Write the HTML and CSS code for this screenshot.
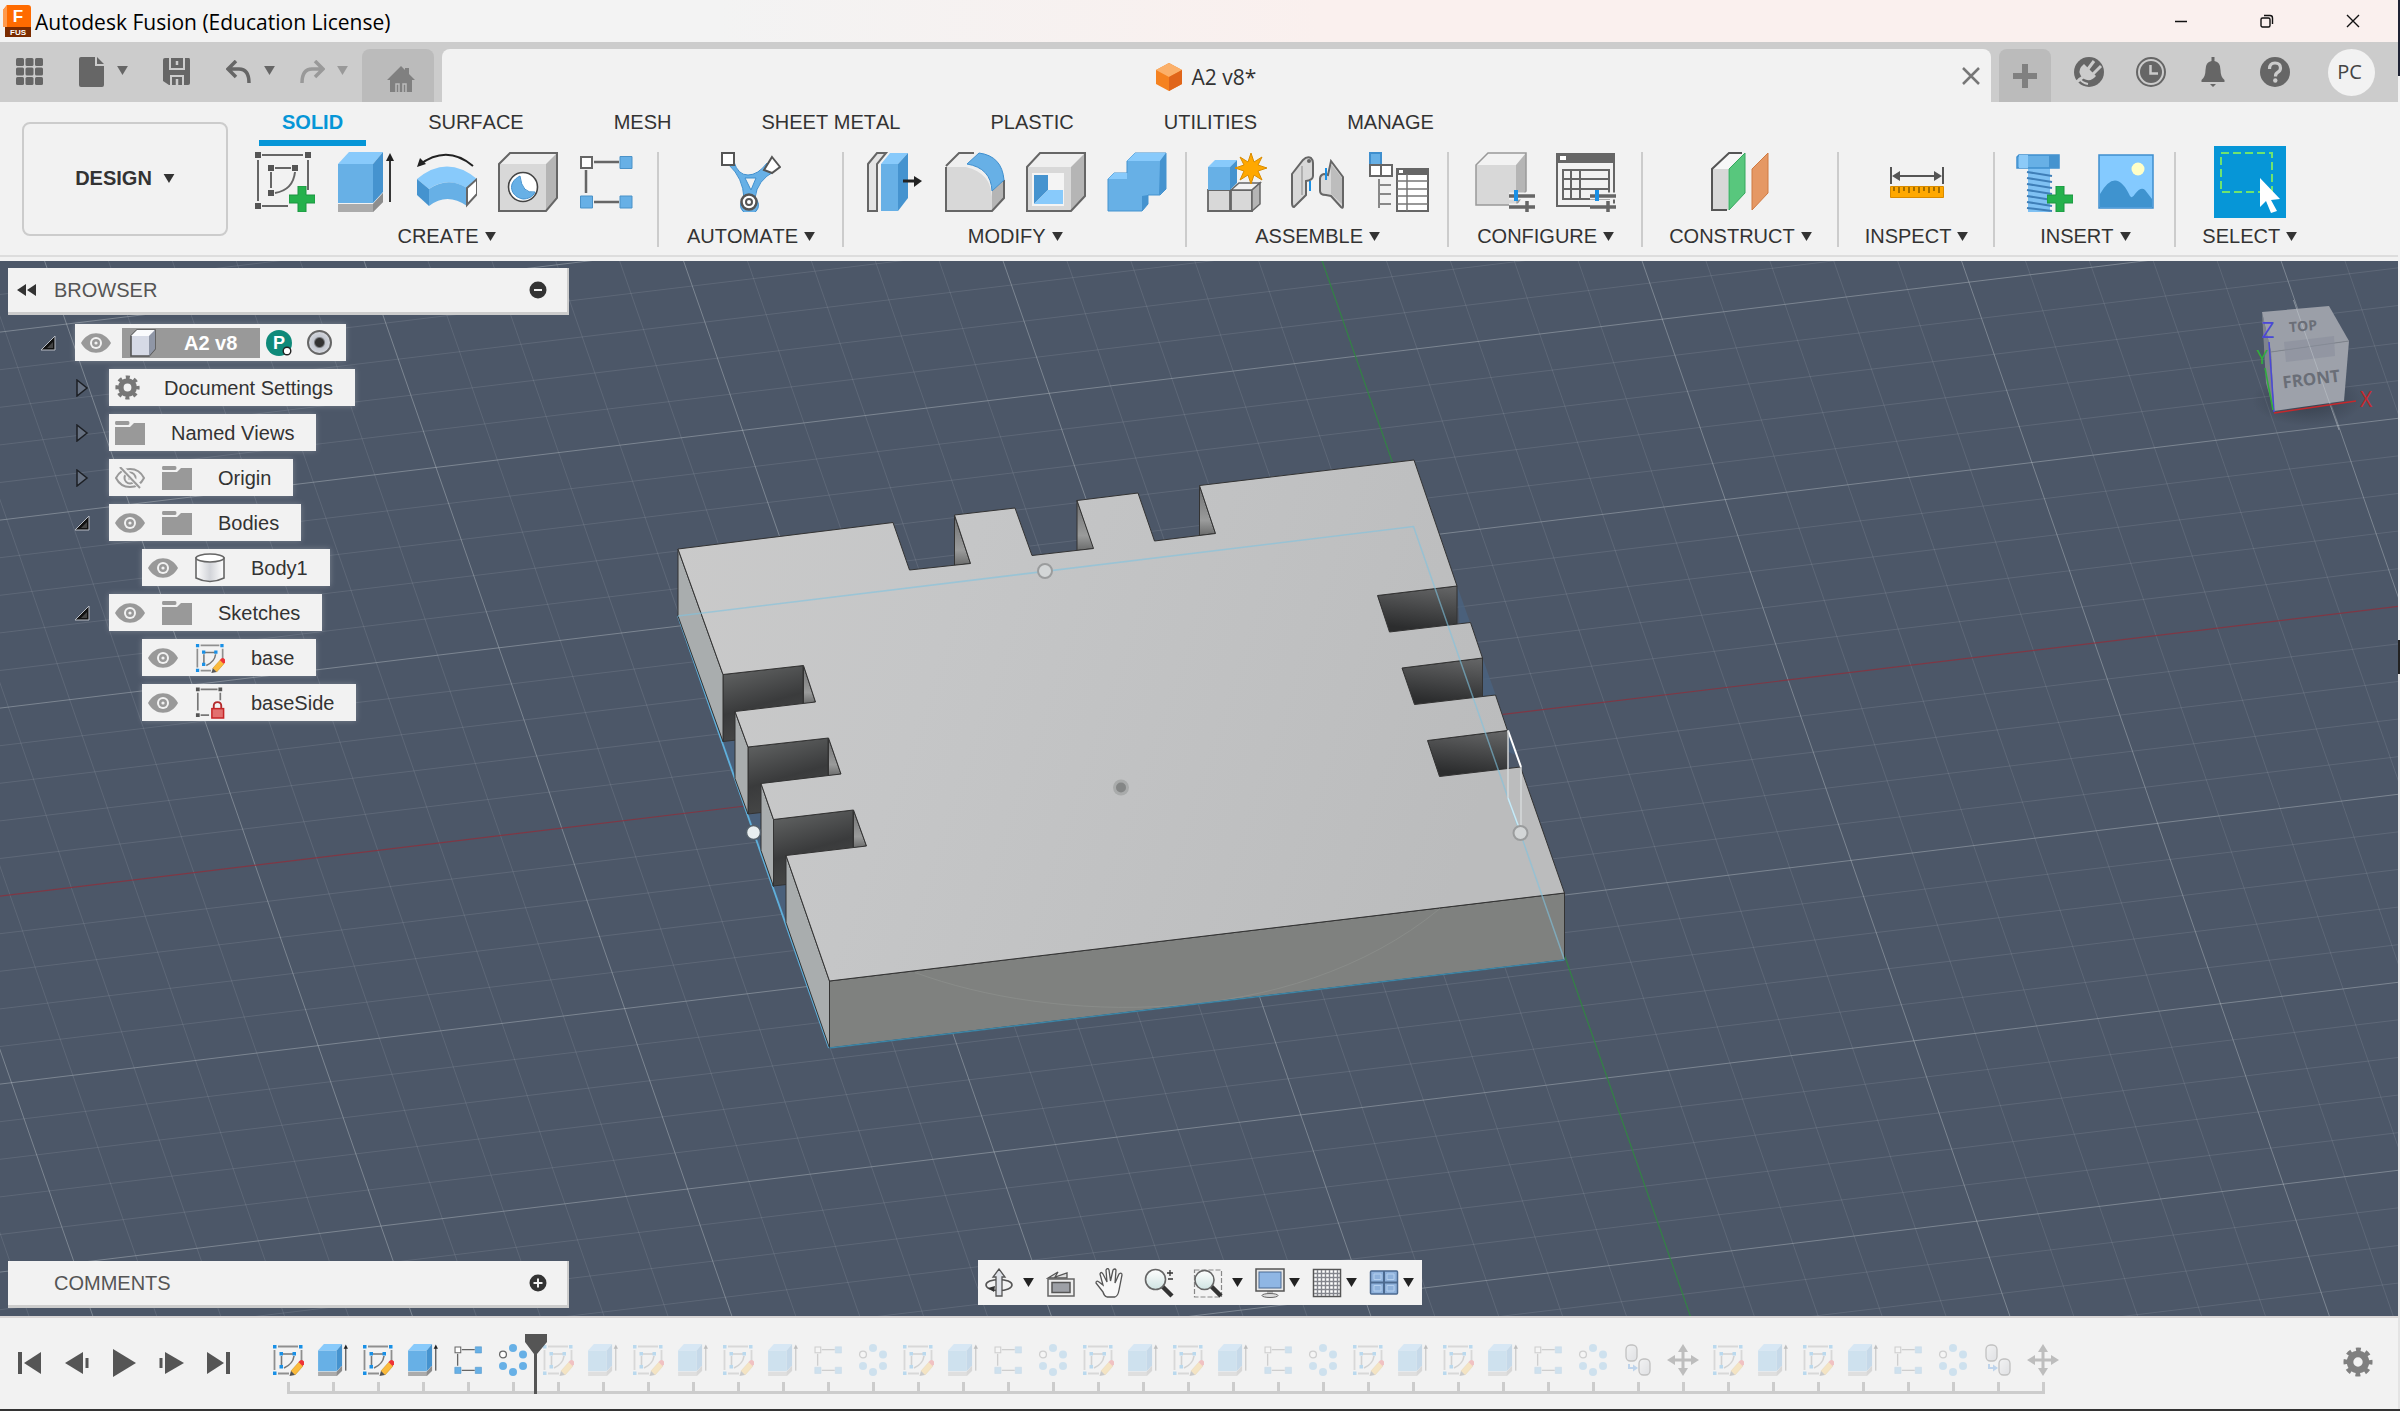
FILE: index.html
```html
<!DOCTYPE html>
<html lang="en">
<head>
<meta charset="utf-8">
<title>Autodesk Fusion (Education License)</title>
<link rel="stylesheet" href="styles.css">
</head>
<body>
<svg class="defs" aria-hidden="true">
  <defs>
    <linearGradient id="metal" x1="0" y1="0" x2="1" y2="1"><stop offset="0" stop-color="#f4f6f8"/><stop offset="1" stop-color="#a9aeba"/></linearGradient>
    <linearGradient id="tube" x1="0" y1="0" x2="1" y2="0"><stop offset="0" stop-color="#ffffff"/><stop offset=".5" stop-color="#d2d4d9"/><stop offset="1" stop-color="#ffffff"/></linearGradient>
    <linearGradient id="lens" x1="0" y1="0" x2="0" y2="1"><stop offset="0" stop-color="#ffffff"/><stop offset="1" stop-color="#cfe3e2"/></linearGradient>
    <symbol id="caret" viewBox="0 0 12 10"><path d="M0 0h12L6 10z" fill="currentColor"/></symbol>
    <symbol id="gear" viewBox="0 0 32 32"><circle cx="16" cy="16" r="8.500" fill="none" stroke="currentColor" stroke-width="7"/><circle cx="16" cy="16" r="13" fill="none" stroke="currentColor" stroke-width="5" stroke-dasharray="5.1 5.11" stroke-dashoffset="2.55"/></symbol>
    <symbol id="eye" viewBox="0 0 30 22"><path d="M0 11C7-2 23-2 30 11 23 24 7 24 0 11z" fill="#999"/><circle cx="15" cy="11" r="6" fill="#f2f2f2"/><circle cx="15" cy="11" r="4" fill="#999"/><circle cx="15" cy="11" r="1.600" fill="#f2f2f2"/></symbol>
    <symbol id="eye-off" viewBox="0 0 30 22"><path d="M1 11C7-1 23-1 29 11 23 23 7 23 1 11z" fill="none" stroke="#999" stroke-width="2"/><circle cx="15" cy="11" r="5.500" fill="none" stroke="#999" stroke-width="2"/><circle cx="15" cy="11" r="2" fill="#999"/><path d="M6 0l20 21" stroke="#f2f2f2" stroke-width="5"/><path d="M5 0l20 21" stroke="#999" stroke-width="2"/></symbol>
    <symbol id="folder" viewBox="0 0 30 24"><path d="M1 0h12q1.500 0 1.500 2t-1.500 2H1Q0 4 0 2t1-2z" fill="#999"/><path d="M0 6h15l4-4h11v22H0z" fill="#999"/></symbol>
    <symbol id="open" viewBox="0 0 16 16"><path d="M15 1v14H1z" fill="#111" stroke="#b8bcc4" stroke-width="1"/><path d="M13 7v6H7z" fill="#444"/></symbol>
    <symbol id="closed" viewBox="0 0 12 18"><path d="M1 1l10 8-10 8z" fill="#667080" stroke="#1c1f24" stroke-width="1.500"/></symbol>
    <symbol id="sketch" viewBox="0 0 32 32"><path d="M6 2.500h20M2.500 6v20M6 29.500h11M29.500 6v12" stroke="#8f8f8f" stroke-width="1.800" fill="none"/><path d="M10 10h12M9.500 12v11M22 12q-1 8-10 12" stroke="#777" stroke-width="1.600" fill="none"/><g fill="#1990e6"><path d="M1 1h3.500v3.500H1zM27 1h3.500v3.500H27zM1 27.500h3.500V31H1zM7.500 8H11v3.500H7.500zM20.500 8H24v3.500h-3.500zM7.500 21H11v3.500H7.500z"/></g><path d="M19 27l8-9 4 4-8 9z" fill="#fbbb3c" stroke="#cf9420" stroke-width=".6"/><path d="M26.500 18l1.500-1.500q2-1 3.500.5t.5 3.500L30.500 22z" fill="#ee3338"/><path d="M19 27l4 4-5.500 1z" fill="#555"/></symbol>
    <symbol id="sketch-lock" viewBox="0 0 32 34"><path d="M6 2.500h18M3 6v19M6 30h9M27 6v8" stroke="#777" stroke-width="1.800" fill="none"/><path d="M1 .5h4v4H1zM25 .5h4v4h-4zM1 28h4v4H1z" fill="#555"/><path d="M20 23v-3q0-4 4-4t4 4v3" fill="none" stroke="#b32a2c" stroke-width="2"/><rect x="18" y="23" width="12.500" height="10" fill="#e2706f" stroke="#c62527" stroke-width="1.600"/></symbol>
    <symbol id="extrude" viewBox="0 0 56 60"><path d="M0 52h35l10-11v9L35 60H0z" fill="#ababab"/><path d="M35 60l10-10v-9L35 52z" fill="#8d8d8d"/><path d="M0 12h35v39H0z" fill="#67b0e6"/><path d="M0 12L11 0h34L35 12z" fill="#88cafb"/><path d="M35 12L45 0v40L35 51z" fill="#4593cf"/><path d="M52 50V6" stroke="#222" stroke-width="1.800"/><path d="M48 9l4-8 4 8z" fill="#222"/></symbol>
    <symbol id="rect-pattern" viewBox="0 0 54 54"><path d="M15 7h25M15 47h25M7 15v23" stroke="#666" stroke-width="2.500"/><path d="M2 2h11v11H2z" fill="#fff" stroke="#666" stroke-width="2"/><g fill="#67b0e6" stroke="#4b92c8"><path d="M41 1.500h12v12H41zM1.500 41h12v12h-12zM41 41h12v12H41z"/></g></symbol>
    <symbol id="circ-pattern" viewBox="0 0 32 32"><g fill="#67b0e6"><circle cx="16" cy="4" r="4"/><circle cx="26" cy="10.500" r="4"/><circle cx="26" cy="22" r="4"/><circle cx="16" cy="28" r="4"/><circle cx="6" cy="22" r="4"/></g><circle cx="6" cy="10.500" r="3.400" fill="#fff" stroke="#666" stroke-width="1.300"/></symbol>
    <symbol id="joint" viewBox="0 0 32 32"><g fill="url(#metal)" stroke="#333" stroke-width="1.300"><rect x="4" y="1" width="11" height="16" rx="4.500"/><rect x="17" y="15" width="11" height="16" rx="4.500"/></g><path d="M7 20v4h5" stroke="#2a7fd8" stroke-width="2" fill="none"/><path d="M11 20.500l5 3.500-5 3.500z" fill="#2a7fd8"/></symbol>
    <symbol id="move" viewBox="0 0 32 32"><path d="M16 5v22M5 16h22" stroke="#222" stroke-width="3"/><path d="M16 0l5 8H11zM16 32l5-8H11zM0 16l8-5v10zM32 16l-8-5v10z" fill="#222"/></symbol>
    <symbol id="plus" viewBox="0 0 26 26"><path d="M9 0h8v9h9v8h-9v9H9v-9H0V9h9z" fill="#24b14c" stroke="#1a9440" stroke-width="1"/></symbol>
  </defs>
</svg>

<div class="app">
  <header class="titlebar">
    <svg class="app-icon" viewBox="0 0 28 32"><path d="M0 5l4-5h21q3 0 3 3v19H0z" fill="#ff6b00"/><path d="M0 5l4-5v22H0z" fill="#ff9a4d"/><path d="M2 22h26v10H2z" fill="#7a2b00"/><text x="15" y="17" text-anchor="middle" class="app-f">F</text><text x="15" y="30" text-anchor="middle" class="app-fus">FUS</text></svg>
    <h1 class="app-title">Autodesk Fusion (Education License)</h1>
    <div class="window-buttons">
      <button aria-label="Minimize"><svg width="14" height="14"><path d="M1 7.500h12" stroke="#111" stroke-width="1.500"/></svg></button>
      <button aria-label="Restore"><svg width="14" height="14"><rect x="1" y="4" width="9" height="9" rx="1.500" fill="none" stroke="#111" stroke-width="1.400"/><path d="M4 1.500h6q2.500 0 2.500 2.500v6" fill="none" stroke="#111" stroke-width="1.400"/></svg></button>
      <button aria-label="Close"><svg width="14" height="14"><path d="M1 1l12 12M13 1L1 13" stroke="#111" stroke-width="1.400"/></svg></button>
    </div>
  </header>

  <div class="tabstrip">
    <div class="quick">
      <button class="q-grid" aria-label="Data panel"><svg width="28" height="28" viewBox="0 0 28 28" fill="#666"><g id="r"><rect width="8" height="8" rx="1.500" /><rect x="9.500" width="8" height="8" rx="1.500"/><rect x="19" width="8" height="8" rx="1.500"/></g><use href="#r" y="9.500"/><use href="#r" y="19"/></svg></button>
      <button class="q-file" aria-label="File"><svg width="26" height="30" viewBox="0 0 26 30" fill="#666"><path d="M2 0h14v9h9v19q0 2-2 2H2q-2 0-2-2V2q0-2 2-2zM18 0l7 7h-7z"/></svg><svg class="caret-l"><use href="#caret"/></svg></button>
      <button class="q-save" aria-label="Save"><svg width="28" height="28" viewBox="0 0 28 28"><path d="M2 0h24q1 0 1 2v23q0 2-2 2H6l-6-4V2q0-2 2-2z" fill="#666"/><path d="M7 0v11h14V0M8 27v-9h12v9" fill="none" stroke="#ccc" stroke-width="2"/><path d="M14 3v4M14 21v6" stroke="#ccc" stroke-width="2.500"/></svg></button>
      <button class="q-undo" aria-label="Undo"><svg width="26" height="24" viewBox="0 0 26 24"><path d="M10 1L2 9l8 8M2 9h11q10 0 10 14" fill="none" stroke="#666" stroke-width="3.500"/></svg><svg class="caret-l"><use href="#caret"/></svg></button>
      <button class="q-redo" aria-label="Redo"><svg width="26" height="24" viewBox="0 0 26 24"><path d="M16 1l8 8-8 8M24 9H13Q3 9 3 23" fill="none" stroke="#999" stroke-width="3.500"/></svg><svg class="caret-l"><use href="#caret"/></svg></button>
    </div>
    <button class="home-tab" aria-label="Home"><svg width="28" height="26" viewBox="0 0 28 26"><path d="M14 0l4 4V2h4v6l6 6h-3v12H3V14H0z" fill="#808080"/><path d="M9 26v-8h3v8M16 26v-8h3v8" fill="none" stroke="#bbb" stroke-width="1.500"/></svg></button>
    <div class="doc-tab">
      <span class="doc-name"><svg width="28" height="30" viewBox="0 0 28 30"><path d="M14 1l13 7v14l-13 7-13-7V8z" fill="#f58220"/><path d="M14 1l13 7-13 7L1 8z" fill="#fbb06a"/><path d="M14 15l13-7v14l-13 7z" fill="#e0651a"/></svg>A2 v8*</span>
      <button class="doc-close" aria-label="Close tab"><svg width="18" height="18"><path d="M1 1l16 16M17 1L1 17" stroke="#777" stroke-width="2.500"/></svg></button>
    </div>
    <button class="new-tab" aria-label="New tab"><svg width="24" height="24"><path d="M12 0v24M0 12h24" stroke="#808080" stroke-width="6"/></svg></button>
    <div class="status">
      <button aria-label="Extensions"><svg width="30" height="30" viewBox="0 0 30 30"><circle cx="15" cy="15" r="15" fill="#666"/><path d="M0 27l9-7" stroke="#ccc" stroke-width="3"/><path d="M10 7l12 12q-4 5-9 4t-7-6 4-10z" fill="#ccc"/><path d="M14 12l6-8M19 17l8-8" stroke="#ccc" stroke-width="3"/><path d="M5 21q3 5 9 6" stroke="#ccc" stroke-width="2" fill="none"/></svg></button>
      <button aria-label="Job status"><svg width="30" height="30" viewBox="0 0 30 30"><circle cx="15" cy="15" r="14" fill="none" stroke="#666" stroke-width="2"/><circle cx="15" cy="15" r="11" fill="#666"/><path d="M14.500 8v8.500H22" fill="none" stroke="#ccc" stroke-width="2.500"/></svg></button>
      <button aria-label="Notifications"><svg width="30" height="30" viewBox="0 0 30 30" fill="#666"><path d="M13.500 0h3v4q6 1 6 9 0 7 4 10v2h-23v-2q4-3 4-10 0-8 6-9zM12 27h6l-3 3z"/></svg></button>
      <button aria-label="Help"><svg width="30" height="30" viewBox="0 0 30 30"><circle cx="15" cy="15" r="15" fill="#666"/><path d="M9.500 12q0-6 5.500-6t5.500 5q0 3-3 4.500-2 1-2 4" fill="none" stroke="#ccc" stroke-width="3.200"/><circle cx="15.300" cy="23.500" r="2.200" fill="#ccc"/></svg></button>
      <button class="avatar">PC</button>
    </div>
  </div>

  <section class="ribbon">
    <button class="workspace">DESIGN<svg class="caret-d"><use href="#caret"/></svg></button>
    <div class="ribbon-main">
      <nav class="ribbon-tabs">
        <a href="#solid" class="active">SOLID</a><a href="#surface">SURFACE</a><a href="#mesh">MESH</a><a href="#sheet">SHEET METAL</a><a href="#plastic">PLASTIC</a><a href="#utilities">UTILITIES</a><a href="#manage">MANAGE</a>
      </nav>
      <div class="groups">
        <div class="group"><div class="tools">
          <button aria-label="Create sketch"><svg viewBox="0 0 60 60"><path d="M7 3h41M3 8v41M7 54h26M53 8v30M20 16h16M16 20v16M40 20q-2 18-20 21" fill="none" stroke="#666" stroke-width="2"/><path d="M0 0h6v6H0zM50 0h6v6h-6zM0 51h6v6H0zM13 13h6v6h-6zM37 13h6v6h-6zM13 38h6v6h-6z" fill="#555"/><use href="#plus" x="34" y="34" width="26" height="26"/></svg></button>
          <button aria-label="Extrude"><svg viewBox="0 0 60 60"><use href="#extrude" x="2" width="56" height="60"/></svg></button>
          <button aria-label="Revolve"><svg viewBox="0 0 60 60"><path d="M2 13Q30-8 56 14" fill="none" stroke="#222" stroke-width="2"/><path d="M0 15l3-9 6 6z" fill="#222"/><path d="M0 27Q30 2 60 27L50 36Q30 24 12 37z" fill="#88cafb"/><path d="M0 27l12 10v17L0 43z" fill="#4593cf"/><path d="M12 37q19-13 38-1v18Q30 40 12 54z" fill="#67b0e6"/><path d="M50 36l10-9v15L50 53z" fill="#fff" stroke="#666" stroke-width="2"/></svg></button>
          <button aria-label="Hole"><svg viewBox="0 0 60 60"><path d="M1 12h47v47H1z" fill="#d8d8d8"/><path d="M1 12L12 1h47L48 12z" fill="#efefef"/><path d="M48 12L59 1v45L48 59z" fill="#b5b5b5"/><path d="M1 12L12 1h47v45L48 59H1z" fill="none" stroke="#666" stroke-width="2"/><circle cx="25" cy="35" r="14.500" fill="#fff" stroke="#444" stroke-width="1.600"/><path d="M22 24q2 18 15 16c-2 5-7 7-12 7-12-2-17-16-3-23z" fill="#67b0e6" stroke="#4593cf"/></svg></button>
          <button aria-label="Rectangular pattern"><svg viewBox="0 0 60 60"><use href="#rect-pattern" y="3" width="54" height="54"/></svg></button>
        </div><button class="g-label">CREATE<svg><use href="#caret"/></svg></button></div>

        <div class="group roomy"><div class="tools">
          <button aria-label="Automated modeling"><svg viewBox="0 0 60 60"><path d="M13 10q4 13 14 13t19-12l8 8Q36 28 34 46a9 9 0 11-11 0Q22 26 8 13z" fill="#67b0e6" stroke="#3f8fce"/><path d="M24 26h11l-5 12z" fill="#f2f2f2" stroke="#3f8fce"/><circle cx="28" cy="50" r="7.500" fill="#fff" stroke="#555" stroke-width="2.500"/><circle cx="28" cy="50" r="3" fill="#fff" stroke="#555" stroke-width="2"/><path d="M1 1h12v12H1z" fill="#fff" stroke="#555" stroke-width="2"/><path d="M51 5l8 10-8 6-8-3z" fill="#fff" stroke="#555" stroke-width="2"/></svg></button>
        </div><button class="g-label">AUTOMATE<svg><use href="#caret"/></svg></button></div>

        <div class="group"><div class="tools">
          <button aria-label="Press pull"><svg viewBox="0 0 60 60"><path d="M4 12L13 1h9l-9 11v47H4z" fill="#e4e4e4" stroke="#666" stroke-width="2"/><path d="M17 12h17v47H17z" fill="#67b0e6"/><path d="M17 12L26 1h18L34 12z" fill="#88cafb"/><path d="M34 12L44 1v45L34 59z" fill="#4593cf"/><path d="M39 29h12" stroke="#222" stroke-width="3"/><path d="M50 24l8 5-8 6z" fill="#222"/></svg></button>
          <button aria-label="Fillet"><svg viewBox="0 0 60 60"><path d="M1 14L14 1h17q26 4 28 28v18L47 59H1z" fill="#efefef"/><path d="M1 15h20q25 6 26 30v14H1z" fill="#d8d8d8"/><path d="M47 38l12-10v18L47 59z" fill="#b5b5b5"/><path d="M1 14L14 1h15M59 28v18L47 59H1V15" fill="none" stroke="#666" stroke-width="2"/><path d="M22 12L34 1q23 3 25 27L47 39Q46 16 22 12z" fill="#67b0e6" stroke="#3f8fce"/></svg></button>
          <button aria-label="Shell"><svg viewBox="0 0 60 60"><path d="M1 15L14 1h45v43L45 59H1z" fill="#efefef"/><path d="M1 15h44v44H1z" fill="#d8d8d8"/><path d="M45 15L59 1v43L45 59z" fill="#b5b5b5"/><path d="M1 15L14 1h45v43L45 59H1z" fill="none" stroke="#666" stroke-width="2"/><path d="M6 21h32v33H6z" fill="#f4f4f4"/><path d="M8 23h14v15L8 52z" fill="#4593cf"/><path d="M22 38h15v14H8z" fill="#88cafb"/></svg></button>
          <button aria-label="Combine"><svg viewBox="0 0 60 60"><path d="M1 27l6-6h13V9l8-8h31v36l-6 6H41v9l-6 7H1z" fill="#67b0e6" stroke="#4593cf"/><path d="M1 27l6-6h13v6zM20 9l8-8h31l-6 8z" fill="#88cafb"/><path d="M53 9l6-8v36l-7 6zM35 44l6-1v9l-6 7z" fill="#4593cf"/></svg></button>
        </div><button class="g-label">MODIFY<svg><use href="#caret"/></svg></button></div>

        <div class="group"><div class="tools">
          <button aria-label="New component"><svg viewBox="0 0 60 60"><path d="M1 38h22v21H1zM24 38h21v21H24z" fill="#d8d8d8" stroke="#666" stroke-width="1.800"/><path d="M24 38l8-7h21l-8 7z" fill="#f2f2f2" stroke="#666" stroke-width="1.500"/><path d="M45 38l8-7v21l-8 7z" fill="#b5b5b5" stroke="#666" stroke-width="1.500"/><path d="M1 15h22v23H1z" fill="#67b0e6"/><path d="M1 15l7-7h22l-7 7z" fill="#88cafb"/><path d="M23 15l7-7v23l-7 7z" fill="#4593cf"/><path d="M44 1l3 9 8-5-4 8 9 3-9 3 4 9-8-5-3 9-3-9-8 5 4-9-9-3 9-3-4-8 8 5z" fill="#ffa800" stroke="#d98b00"/></svg></button>
          <button aria-label="Joint"><svg viewBox="0 0 60 60"><path d="M4 22L15 8q4-4 8-2 2 2 2 5v13q0 4-7 5v14L6 55q-2 0-2-4z" fill="#d8d8d8" stroke="#666" stroke-width="2"/><path d="M14 14v29" stroke="#888"/><path d="M43 9l12 16v29q0 3-2 1L43 44l-5-1q-6 0-6-4V27q0-4 4-5l4 1z" fill="#d8d8d8" stroke="#666" stroke-width="2"/><path d="M43 12l11 14v26L43 42z" fill="#bdbdbd"/><path d="M22 29v10M38 16v12" stroke="#1990e6" stroke-width="2"/><circle cx="21" cy="9" r="2" fill="#666"/></svg></button>
          <button aria-label="Bill of materials"><svg viewBox="0 0 60 60"><path d="M1 1h11v12H1z" fill="#67b0e6" stroke="#3f8fce" stroke-width="2"/><path d="M1 13h11v11H1zM12 13h11v11H12z" fill="#fff" stroke="#666" stroke-width="2"/><path d="M10 27v29M10 33h12M10 42h12M10 52h12" stroke="#888" stroke-width="2"/><path d="M28 17h31v42H28z" fill="#fff" stroke="#666" stroke-width="2"/><path d="M28 16h31v7H28z" fill="#666"/><path d="M28 29h31M28 37h31M28 44h31M28 52h31M38 22v37" stroke="#777" stroke-width="1.500"/><path d="M30 18h4v3h-4z" fill="#fff"/></svg></button>
        </div><button class="g-label">ASSEMBLE<svg><use href="#caret"/></svg></button></div>

        <div class="group roomy"><div class="tools">
          <button aria-label="Configure"><svg viewBox="0 0 60 60"><path d="M1 13h40v40H1z" fill="#d8d8d8"/><path d="M1 13L13 1h38L41 13z" fill="#f2f2f2"/><path d="M41 13L51 1v38L41 53z" fill="#b5b5b5"/><path d="M1 13L13 1h38v38L41 53H1z" fill="none" stroke="#999" stroke-width="1.500"/><g id="sl"><path d="M34 44h26M34 55h26" stroke="#f2f2f2" stroke-width="7"/><path d="M34 44h26M34 55h26M52 49v11" stroke="#666" stroke-width="3.500"/><path d="M41 38v11" stroke="#1990e6" stroke-width="4"/></g></svg></button>
          <button aria-label="Configuration table"><svg viewBox="0 0 60 60"><path d="M1 2h57v52H1z" fill="#f2f2f2" stroke="#666" stroke-width="2"/><path d="M0 1h59v10H0z" fill="#666"/><path d="M4 4h6v4H4zM7 18h46v29H7zM7 27h46M7 37h46M15 18v29M24 18v29" fill="none" stroke="#666" stroke-width="2"/><path d="M4 4h6v4H4z" fill="#fff"/><use href="#sl"/></svg></button>
        </div><button class="g-label">CONFIGURE<svg><use href="#caret"/></svg></button></div>

        <div class="group"><div class="tools">
          <button aria-label="Offset plane"><svg viewBox="0 0 60 60"><path d="M2 17L19 1h14L18 17v41H2z" fill="#f7f7f7"/><path d="M2 17h16v41H2z" fill="#d8d8d8"/><path d="M32 1H19L2 17v41h15" fill="none" stroke="#555" stroke-width="2"/><path d="M19 17L35 1v40L19 58z" fill="#58c77d" stroke="#35a85e"/><path d="M42 17L58 1v40L42 58z" fill="#e59864" stroke="#cf7a42"/></svg></button>
        </div><button class="g-label">CONSTRUCT<svg><use href="#caret"/></svg></button></div>

        <div class="group"><div class="tools">
          <button aria-label="Measure"><svg viewBox="0 0 60 60"><path d="M4 15v17M56 15v17M8 24h44" stroke="#555" stroke-width="2"/><path d="M5 24l8-5v10zM55 24l-8-5v10z" fill="#555"/><path d="M3.500 34.500h53v11h-53z" fill="#ffa800" stroke="#d98b00"/><path d="M7 35v4M12 35v6M17 35v4M22 35v6M27 35v4M32 35v6M37 35v4M42 35v6M47 35v4M52 35v6" stroke="#6b4a00" stroke-width="1.200"/></svg></button>
        </div><button class="g-label">INSPECT<svg><use href="#caret"/></svg></button></div>

        <div class="group"><div class="tools">
          <button aria-label="Insert fastener"><svg viewBox="0 0 60 60"><path d="M13 16h22v44H13z" fill="#7fc1f3"/><path d="M12 20l25 4M12 26l25 4M12 32l25 4M12 38l25 4M12 44l25 4M12 50l25 4M12 56l25 3" stroke="#3f7fb8" stroke-width="2"/><path d="M4 3h40v13H2V5z" fill="#67b0e6" stroke="#3f8fce" stroke-width="1.500"/><path d="M4 3h9v13H4z" fill="#8ccaf8"/><path d="M34 3h10v13H34z" fill="#4593cf"/><use href="#plus" x="32" y="34" width="26" height="26"/></svg></button>
          <button aria-label="Insert image"><svg viewBox="0 0 60 60"><path d="M3 3h54v53H3z" fill="#84caff" stroke="#3f8fce" stroke-width="1.500"/><path d="M4 42q16-28 30 2 2 3 5-2 6-8 10-4l7 9v8H4z" fill="#3f93cf"/><circle cx="42" cy="17" r="6.500" fill="#ffffc8"/></svg></button>
        </div><button class="g-label">INSERT<svg><use href="#caret"/></svg></button></div>

        <div class="group"><div class="tools">
          <button class="selected" aria-label="Select"><svg viewBox="0 0 72 72"><path d="M7 7h51v39H7z" fill="none" stroke="#6fe36f" stroke-width="2" stroke-dasharray="8 4"/><path d="M46 32l20 21-9 1 6 11-6 2-5-12-6 6z" fill="#fff"/></svg></button>
        </div><button class="g-label">SELECT<svg><use href="#caret"/></svg></button></div>
      </div>
    </div>
  </section>

  <main class="viewport">
    <svg class="scene" viewBox="0 260 2398 1056" preserveAspectRatio="xMidYMid slice">
      <defs>
        <linearGradient id="top" x1="0" y1="0" x2="1" y2="0.200"><stop offset="0" stop-color="#cacaca"/><stop offset=".35" stop-color="#c5c6c7"/><stop offset="1" stop-color="#bbbcbd"/></linearGradient>
        <linearGradient id="pocket" x1="1" y1="0" x2=".8" y2="1"><stop offset="0" stop-color="#666768"/><stop offset="1" stop-color="#2c2d2e"/></linearGradient>
        <linearGradient id="wall" x1="0" y1="0" x2=".3" y2="1"><stop offset="0" stop-color="#666868"/><stop offset=".6" stop-color="#3a3b3c"/><stop offset="1" stop-color="#464747"/></linearGradient>
        <linearGradient id="sliver" x1="0" y1="0" x2="0" y2="1"><stop offset="0" stop-color="#6f7071"/><stop offset=".7" stop-color="#9a9b9b"/><stop offset="1" stop-color="#6a6b6b"/></linearGradient>
      </defs>
      <g id="grid"></g>
      <path class="axis-x" d="M0 895.600L2398 605.800"/>
      <path class="axis-y" d="M1322 260L1690.500 1316"/>
      <path d="M1457 585l60 170-50-20z" fill="#4a637f" opacity=".8"/>
      <path d="M678 615.500l151 432 20-60-150-400z" fill="#4a637f" opacity=".8"/>
      <path d="M678 615.500l151 432" stroke="#5fb0dc" stroke-width="1.800"/>
      <g class="edges">
        <g fill="url(#wall)">
          <path d="M723 674l80-9v67l-80 9z"/><path d="M748 746.500l80-9v67l-80 9z"/><path d="M773 819l80-9.500v67l-80 9z"/>
        </g>
        <g fill="url(#sliver)">
          <path d="M803.500 665l12 36.500-12 2z"/><path d="M828.500 737.500l12.500 36-12.500 2z"/><path d="M853.500 809.500l13 36-13 2z"/>
          <path d="M954.500 514.500l16 48.500-16 2z"/><path d="M1077 500l17 48-17 2z"/><path d="M1199.500 485l16 48-16 2z"/>
        </g>
        <g fill="#a9adae">
          <path d="M678 548.500l45 125.500v67L678 615.500z"/><path d="M735 711l13 35.500v67L735 778z"/><path d="M761 783l12.500 36v67L761 850z"/><path d="M786 855l43.500 125.500v67L786 922z"/>
        </g>
        <path d="M829.500 980.500l735-88v67l-735 88z" fill="#7f817f"/>
        <g fill="url(#pocket)">
          <path d="M1377.500 595l79.500-9.500v38l-67.500 8z"/><path d="M1402 667.500l80.500-10v38.500l-68 8z"/><path d="M1427.500 740l80-10v38l-68 8z"/>
        </g>
        <path fill="url(#top)" d="M678 548.500L893 522l16.500 47.500 61-6.500-16-48.500 60.500-7 17 47.500 61.500-7-16.500-48 61-7.500 16.500 48 61-7.500-16-48 214.500-25.500L1457 585.500l-79.500 9.500 12 36.500 81-9.500 12 35.500-80.500 10 12.500 36.500 81-9.500 12 35.500-80 10 12 36 81-9.500 44 126-735 88L786 855l80.500-9.500-13-36-80 9.500L761 783l80-9.500-12.500-36-80.500 9L735 711l80.500-9.500-12-36.500-80.500 9z"/>
      </g>
      <path d="M915 972C1050 1022 1290 1032 1440 908" fill="none" stroke="#90928f" stroke-opacity=".6"/>
      <path class="sketch-line" d="M678 615.500L1413.500 526l151 433.500"/>
      <path class="sketch-front" d="M829.500 1047.500l735-88"/>
      <path d="M1508 730l13 36.500" stroke="#fff" stroke-width="2"/>
      <path d="M1508 730v67.500M1521 766.500v66" stroke="#d6d9da" stroke-width="1.500"/>
      <path d="M1508 797.500l13 35" stroke="#c9e9f5" stroke-width="1.500"/>
      <g stroke="#9a9c9d" stroke-width="2" fill="#d3d6d7"><circle cx="1045" cy="570.500" r="7"/><circle cx="1520.500" cy="832.500" r="7"/></g>
      <circle cx="753.500" cy="832" r="7" fill="#e8eef0" stroke="#54606b" stroke-width="1.500"/>
      <circle cx="1121" cy="787" r="8" fill="#a9abab"/><circle cx="1121" cy="787" r="5" fill="#848686"/>
    </svg>

    <aside class="browser">
      <div class="panel-head"><button aria-label="Collapse"><svg width="20" height="12"><path d="M9 0v12L0 6zM19 0v12L10 6z" fill="#333"/></svg></button><h2>BROWSER</h2><button class="fold" aria-label="Hide panel"><svg width="18" height="18"><circle cx="9" cy="9" r="8.500" fill="#333"/><path d="M5 9h8" stroke="#f2f2f2" stroke-width="2"/></svg></button></div>
      <ul class="tree">
        <li class="row d0"><svg class="tw"><use href="#open"/></svg><div class="chip"><svg class="eye"><use href="#eye"/></svg><span class="root"><svg width="26" height="28" viewBox="0 0 26 28"><path d="M1 7l6-6h18v19l-6 7H1z" fill="#d6dae6" stroke="#555" stroke-width="1.600"/><path d="M1 7l6-6h18l-6 6z" fill="#fafbfd"/><path d="M19 7l6-6v19l-6 7z" fill="#8f96a6"/></svg>A2 v8</span><svg class="badge" viewBox="0 0 28 28"><circle cx="14" cy="14" r="13" fill="#0f8a7a"/><text x="14" y="20" text-anchor="middle">P</text><circle cx="22" cy="22" r="3.800" fill="#fff" stroke="#222" stroke-width="1.400"/></svg><input type="radio" checked aria-label="Activate A2 v8"></div></li>
        <li class="row"><svg class="tw"><use href="#closed"/></svg><div class="chip"><span class="ico narrow"><svg class="g24"><use href="#gear"/></svg></span>Document Settings</div></li>
        <li class="row"><svg class="tw"><use href="#closed"/></svg><div class="chip"><span class="ico"><svg class="f"><use href="#folder"/></svg></span>Named Views</div></li>
        <li class="row"><svg class="tw"><use href="#closed"/></svg><div class="chip"><svg class="eye"><use href="#eye-off"/></svg><span class="ico"><svg class="f"><use href="#folder"/></svg></span>Origin</div></li>
        <li class="row"><svg class="tw"><use href="#open"/></svg><div class="chip"><svg class="eye"><use href="#eye"/></svg><span class="ico"><svg class="f"><use href="#folder"/></svg></span>Bodies</div></li>
        <li class="row d2"><div class="chip"><svg class="eye"><use href="#eye"/></svg><span class="ico"><svg width="30" height="30" viewBox="0 0 30 30"><path d="M1 5v20q14 7 28 0V5z" fill="url(#tube)" stroke="#666" stroke-width="1.600"/><ellipse cx="15" cy="5" rx="14" ry="4" fill="#fff" stroke="#666" stroke-width="1.600"/></svg></span>Body1</div></li>
        <li class="row"><svg class="tw"><use href="#open"/></svg><div class="chip"><svg class="eye"><use href="#eye"/></svg><span class="ico"><svg class="f"><use href="#folder"/></svg></span>Sketches</div></li>
        <li class="row d2"><div class="chip"><svg class="eye"><use href="#eye"/></svg><span class="ico"><svg class="s"><use href="#sketch"/></svg></span>base</div></li>
        <li class="row d2"><div class="chip"><svg class="eye"><use href="#eye"/></svg><span class="ico"><svg class="s"><use href="#sketch-lock"/></svg></span>baseSide</div></li>
      </ul>
    </aside>

    <svg class="viewcube" width="140" height="130" viewBox="2250 300 140 130">
      <defs><radialGradient id="shade"><stop offset="0" stop-color="#2d3540" stop-opacity=".7"/><stop offset="1" stop-color="#2d3540" stop-opacity="0"/></radialGradient></defs>
      <ellipse cx="2308" cy="400" rx="56" ry="26" fill="url(#shade)"/>
      <path d="M2262 312l9 40 3 59-8-28z" fill="#7f848e"/>
      <path d="M2262 312l67-6 20 35-78 11z" fill="#9b9fa8"/>
      <path d="M2271 352l78-11-5 60-70 10z" fill="#9da1aa"/>
      <path d="M2271 352l78-11" stroke="#7f848c" stroke-width="1"/>
      <path d="M2284 342l50-6 1 20-49 6z" fill="#8a909c" opacity=".6"/>
      <path d="M2283 270l56 160" stroke="#c3cad0" stroke-opacity=".5"/>
      <text class="cube-text" x="2303" y="331" font-size="14" text-anchor="middle" transform="rotate(-5 2303 326)">TOP</text>
      <text class="cube-text" x="2311" y="385" font-size="17" text-anchor="middle" transform="rotate(-7 2311 378)">FRONT</text>
      <path d="M2274 412l-5-70" stroke="#4a47d8" stroke-width="1.500"/><path d="M2273 410l-8-42" stroke="#2fae3b" stroke-width="1.500"/><path d="M2274 413l82-12" stroke="#c5282c" stroke-width="1.500"/>
      <text x="2268" y="338" font-size="22" text-anchor="middle" fill="#4a47d8">Z</text><text x="2262" y="364" font-size="20" text-anchor="middle" fill="#2fae3b">Y</text><text x="2366" y="407" font-size="21" text-anchor="middle" fill="#c5282c">X</text>
    </svg>

    <div class="panel-head comments"><h2>COMMENTS</h2><button class="fold" aria-label="Show comments"><svg width="18" height="18"><circle cx="9" cy="9" r="8.500" fill="#333"/><path d="M4.500 9h9M9 4.500v9" stroke="#f2f2f2" stroke-width="2"/></svg></button></div>

    <div class="navbar">
      <button aria-label="Orbit" class="wide"><svg class="n" viewBox="0 0 30 30"><ellipse cx="15" cy="17" rx="13" ry="5.500" fill="none" stroke="#555" stroke-width="1.600"/><path d="M12 28V9H9l6-8 6 8h-3v19z" fill="#dfe2e8" stroke="#555" stroke-width="1.300"/><path d="M4 20l7-2-1 6z" fill="#333"/></svg><svg class="c"><use href="#caret"/></svg></button>
      <button aria-label="Look at" class="plain"><svg class="n" viewBox="0 0 30 30"><path d="M2 10L12 4l-3 5 12-4v5z" fill="#ddd" stroke="#555" stroke-width="1.300"/><rect x="2" y="11" width="26" height="17" fill="#eee" stroke="#666" stroke-width="1.500"/><rect x="6" y="14.500" width="18" height="10" fill="#9da0a6" stroke="#555" stroke-width="1.500"/></svg></button>
      <button aria-label="Pan" class="plain"><svg class="n" viewBox="0 0 30 30"><path d="M8 24L1 15q0-3 3-1l4 3L5 6q1-3 3 0l4 8-1-12q2-3 3 0l1.500 11L18 2q2-2 3 0l-1 13 4-9q3-2 3 1l-3 15q-1 6-4 7h-8q-3-1-4-5z" fill="#f8f8f8" stroke="#555" stroke-width="1.300"/></svg></button>
      <button aria-label="Zoom" class="plain"><svg class="n" viewBox="0 0 30 30"><path d="M18 18l10 10" stroke="#333" stroke-width="4.500"/><circle cx="11.500" cy="11.500" r="10" fill="url(#lens)" stroke="#666" stroke-width="1.600"/><path d="M26 2v6M23 5h6M24 11h5" stroke="#333" stroke-width="1.300"/></svg></button>
      <button aria-label="Zoom window" class="wide"><svg class="n" viewBox="0 0 30 30"><path d="M1.500 2h27v27h-27z" fill="none" stroke="#888" stroke-width="1.200" stroke-dasharray="5 2"/><path d="M18 18l10 10" stroke="#333" stroke-width="4.500"/><circle cx="11.500" cy="12" r="9.500" fill="url(#lens)" stroke="#666" stroke-width="1.600"/></svg><svg class="c"><use href="#caret"/></svg></button>
      <button aria-label="Display settings"><svg class="n" viewBox="0 0 30 30"><path d="M12 23h6v4h-6z" fill="#bbb"/><ellipse cx="15" cy="27.500" rx="8" ry="2" fill="#ddd" stroke="#666"/><rect x="1" y="1" width="28" height="22" fill="#e6e6e6" stroke="#555" stroke-width="1.500"/><rect x="4" y="4" width="22" height="16" fill="#8fb6e4" stroke="#4a6a94"/></svg><svg class="c"><use href="#caret"/></svg></button>
      <button aria-label="Grid and snaps"><svg class="n" viewBox="0 0 30 30"><rect x="1.500" y="1.500" width="27" height="27" fill="#fff" stroke="#555" stroke-width="1.500"/><path d="M5.500 2v26M9.500 2v26M13.500 2v26M17.500 2v26M21.500 2v26M25.500 2v26M2 5.500h26M2 9.500h26M2 13.500h26M2 17.500h26M2 21.500h26M2 25.500h26" stroke="#84868d" stroke-width="1.400"/></svg><svg class="c"><use href="#caret"/></svg></button>
      <button aria-label="Viewports"><svg class="n" viewBox="0 0 30 30"><rect x="1.500" y="3" width="27" height="23" rx="1" fill="#8fb2dc" stroke="#4c6a90" stroke-width="1.500"/><path d="M15 3v23M2 14.500h26" stroke="#4c6a90" stroke-width="2"/><path d="M5 6h7v5.500H5zM18 6h7v5.500h-7zM5 17.500h7V23H5zM18 17.500h7V23h-7z" fill="none" stroke="#b4cfee"/></svg><svg class="c"><use href="#caret"/></svg></button>
    </div>
  </main>

  <footer class="timeline">
    <div class="playback">
      <button aria-label="Go to start"><svg viewBox="0 0 28 28"><path d="M4 3v22" stroke="#555" stroke-width="4"/><path d="M25 3v22L8 14z" fill="#555"/></svg></button>
      <button aria-label="Step back"><svg viewBox="0 0 28 28"><path d="M20 3v22L2 14z" fill="#555"/><path d="M24 9v10" stroke="#555" stroke-width="3"/></svg></button>
      <button aria-label="Play"><svg viewBox="0 0 28 28"><path d="M3 0l23 14L3 28z" fill="#555"/></svg></button>
      <button aria-label="Step forward"><svg viewBox="0 0 28 28"><path d="M8 3v22l19-11z" fill="#555"/><path d="M4 9v10" stroke="#555" stroke-width="3"/></svg></button>
      <button aria-label="Go to end"><svg viewBox="0 0 28 28"><path d="M24 3v22" stroke="#555" stroke-width="4"/><path d="M3 3v22l17-11z" fill="#555"/></svg></button>
    </div>
    <ol class="features">
      <li><svg><use href="#sketch"/></svg></li><li><svg><use href="#extrude"/></svg></li><li><svg><use href="#sketch"/></svg></li><li><svg><use href="#extrude"/></svg></li><li><svg class="pat"><use href="#rect-pattern"/></svg></li><li class="current"><svg><use href="#circ-pattern"/></svg></li>
      <li class="off"><svg><use href="#sketch"/></svg></li><li class="off"><svg><use href="#extrude"/></svg></li><li class="off"><svg><use href="#sketch"/></svg></li><li class="off"><svg><use href="#extrude"/></svg></li><li class="off"><svg><use href="#sketch"/></svg></li><li class="off"><svg><use href="#extrude"/></svg></li><li class="off"><svg class="pat"><use href="#rect-pattern"/></svg></li><li class="off"><svg><use href="#circ-pattern"/></svg></li>
      <li class="off"><svg><use href="#sketch"/></svg></li><li class="off"><svg><use href="#extrude"/></svg></li><li class="off"><svg class="pat"><use href="#rect-pattern"/></svg></li><li class="off"><svg><use href="#circ-pattern"/></svg></li>
      <li class="off"><svg><use href="#sketch"/></svg></li><li class="off"><svg><use href="#extrude"/></svg></li><li class="off"><svg><use href="#sketch"/></svg></li><li class="off"><svg><use href="#extrude"/></svg></li><li class="off"><svg class="pat"><use href="#rect-pattern"/></svg></li><li class="off"><svg><use href="#circ-pattern"/></svg></li>
      <li class="off"><svg><use href="#sketch"/></svg></li><li class="off"><svg><use href="#extrude"/></svg></li><li class="off"><svg><use href="#sketch"/></svg></li><li class="off"><svg><use href="#extrude"/></svg></li><li class="off"><svg class="pat"><use href="#rect-pattern"/></svg></li><li class="off"><svg><use href="#circ-pattern"/></svg></li><li class="off"><svg><use href="#joint"/></svg></li><li class="off"><svg><use href="#move"/></svg></li>
      <li class="off"><svg><use href="#sketch"/></svg></li><li class="off"><svg><use href="#extrude"/></svg></li><li class="off"><svg><use href="#sketch"/></svg></li><li class="off"><svg><use href="#extrude"/></svg></li><li class="off"><svg class="pat"><use href="#rect-pattern"/></svg></li><li class="off"><svg><use href="#circ-pattern"/></svg></li><li class="off"><svg><use href="#joint"/></svg></li><li class="off"><svg><use href="#move"/></svg></li>
    </ol>
    <button class="settings" aria-label="Timeline settings"><svg><use href="#gear"/></svg></button>
  </footer>
</div>
<div class="edge"></div>
<script src="grid.js"></script>
</body>
</html>
```
FILE: styles.css
```css
* { box-sizing: border-box; }
body { margin: 0; display: grid; grid-template-columns: 1fr 2px; height: 100vh; overflow: hidden; font: 20px/24px "Liberation Sans", Arial, sans-serif; font-kerning: none; color: #333; background: #f2f2f2; border-bottom: 2px solid #333; }
button { border: 0; padding: 0; margin: 0; background: none; font: inherit; font-kerning: none; color: inherit; display: flex; align-items: center; justify-content: center; }
svg { display: block; flex: none; }
h1, h2 { margin: 0; font: inherit; font-kerning: none; }
ul, ol { list-style: none; margin: 0; padding: 0; }
.defs { position: absolute; width: 0; height: 0; }
.app { display: flex; flex-direction: column; min-width: 0; height: calc(100vh - 2px); }
.edge { background: linear-gradient(#1e2233 0 76px, #f2f2f2 76px 640px, #222 640px 674px, #e4e4e4 674px); }

/* title bar */
.titlebar { display: flex; align-items: center; height: 42px; padding-left: 3px; background: linear-gradient(90deg, #f3f3f3 30%, #faf0ee 55%); color: #000; }
.app-icon { width: 28px; height: 32px; }
.app-f { font: bold 17px "Liberation Sans", sans-serif; fill: #fff; }
.app-fus { font: bold 8px "Liberation Sans", sans-serif; fill: #fff; }
.app-title { margin-left: 4px; padding-top: 2px; font: 21px/28px "Open Sans", "Noto Sans", sans-serif; }
.window-buttons { margin-left: auto; display: flex; padding-right: 2px; }
.window-buttons button { width: 86px; height: 40px; }

/* quick access and document tabs */
.tabstrip { display: flex; align-items: flex-end; height: 60px; background: #ccc; color: #666; }
.quick { display: flex; align-items: center; width: 362px; height: 60px; padding-left: 16px; }
.quick button { gap: 11px; }
.q-grid { width: 28px; }
.q-file { margin-left: 35px; }
.q-save { margin-left: 34px; }
.q-undo { margin-left: 35px; }
.q-redo { margin-left: 23px; color: #999; }
.caret-l { width: 13px; height: 9px; margin-bottom: 4px; }
.home-tab { width: 72px; height: 53px; border-radius: 8px 8px 0 0; background: #bbb; padding: 6px 0 0 5px; }
.doc-tab { flex: 1; display: flex; align-items: center; height: 53px; margin: 0 8px; padding-right: 10px; border-radius: 8px 8px 0 0; background: #f2f2f2; }
.doc-name { flex: 1; display: flex; align-items: center; justify-content: center; gap: 9px; padding: 2px 0 0 8px; font: 21px/28px "Open Sans", "Noto Sans", sans-serif; color: #333; }
.doc-close { width: 20px; height: 20px; }
.new-tab { width: 52px; height: 53px; border-radius: 8px 8px 0 0; background: #bbb; }
.status { display: flex; align-items: center; height: 60px; margin-left: 23px; gap: 32px; padding-right: 23px; }
.avatar { width: 47px; height: 47px; border-radius: 50%; background: #f2f2f2; margin-left: 6px; padding-right: 4px; font-family: "Open Sans", "Noto Sans", sans-serif; color: #444; }

/* ribbon */
.ribbon { display: flex; height: 159px; padding-left: 22px; background: #f2f2f2; box-shadow: inset 0 -4px #f2f2f2, inset 0 -6px #ddd; flex: none; }
.workspace { width: 206px; height: 114px; margin-top: 20px; padding-bottom: 2px; border: 2px solid #ccc; border-radius: 8px; font-weight: bold; gap: 11px; }
.caret-d { width: 12px; height: 9px; }
.ribbon-main { display: flex; flex-direction: column; }
.ribbon-tabs { display: flex; gap: 44px; height: 44px; padding-left: 31px; }
.ribbon-tabs a { display: flex; align-items: center; padding: 2px 23px 0; color: #333; text-decoration: none; border-bottom: 6px solid transparent; }
.ribbon-tabs a.active { margin-right: -5px; font-weight: bold; color: #0696d7; border-color: #0696d7; }
.groups { display: flex; padding-left: 7px; }
.group { position: relative; display: flex; flex-direction: column; align-items: center; padding: 0 10px 0 9px; height: 104px; }
.group:not(:last-child) { background: linear-gradient(#ccc, #ccc) right 6px / 2px 95px no-repeat; }
.tools { display: flex; height: 72px; }
.tools button { width: 81px; height: 72px; }
.tools svg { width: 60px; height: 60px; }
.tools .selected { width: 72px; background: #0696d7; }
.tools .selected svg { width: 72px; height: 72px; }
.g-label { gap: 6px; padding: 5px 17px 0; height: 31px; }
.roomy .g-label { padding-inline: 19px; }
.roomy .tools { padding-inline: 5px; }
.g-label svg { width: 11px; height: 9px; }

/* 3D canvas */
.viewport { position: relative; flex: 1; min-height: 0; overflow: hidden; background: #4c5768; }
.scene { position: absolute; inset: 0; width: 100%; height: 100%; }
.minor { stroke: #aab4be; stroke-opacity: .18; stroke-width: 1; }
.major { stroke: #c3cad0; stroke-opacity: .4; stroke-width: 1; }
.axis-x { stroke: #8c2f3c; stroke-width: 1.2; stroke-opacity: .8; }
.axis-y { stroke: #2f8a3f; stroke-width: 1.2; stroke-opacity: .85; }
.edges path { stroke: #333; stroke-width: 1; stroke-linejoin: round; }
.sketch-line { fill: none; stroke: #7fc3e0; stroke-width: 1.5; stroke-opacity: .6; }
.sketch-front { stroke: #3d86a8; stroke-width: 1.5; }
.browser { position: absolute; left: 8px; top: 7px; width: 561px; }
.panel-head { display: flex; align-items: center; height: 47px; padding: 0 20px 0 9px; background: #f2f2f2; border: solid #ccc; border-width: 0 2px 3px 0; color: #555; }
.panel-head h2 { margin-left: 17px; }
.fold { margin-left: auto; }
.comments { position: absolute; left: 8px; bottom: 8px; width: 561px; padding-left: 29px; }
.tree { display: grid; gap: 8px; padding-top: 9px; }
.row { display: flex; align-items: center; height: 37px; padding-left: 66px; }
.row.d0 { padding-left: 32px; }
.row.d2 { padding-left: 134px; }
.tw { width: 16px; height: 18px; margin-right: 19px; }
.chip { display: flex; align-items: center; height: 37px; padding: 0 22px 0 6px; background: #f2f2f2; box-shadow: 0 0 6px rgba(255, 255, 255, .25); }
.d0 .chip { padding-right: 14px; }
.eye { width: 30px; height: 22px; margin-right: 17px; }
.ico { width: 56px; }
.ico.narrow { width: 49px; color: #777; }
.ico .f { width: 30px; height: 24px; }
.ico .s { width: 30px; height: 32px; }
.g24 { width: 25px; height: 25px; }
.root { display: flex; align-items: center; gap: 28px; width: 138px; height: 30px; padding-left: 8px; background: #999; color: #fff; font-weight: bold; }
.badge { width: 28px; height: 28px; margin-left: 5px; }
.badge text { font: bold 18px "Liberation Sans", sans-serif; fill: #fff; }
.chip input { appearance: none; width: 25px; height: 25px; margin: 0 0 0 14px; border: 2px solid #666; border-radius: 50%; background: radial-gradient(#333 0 4px, #c3c7d0 6px, #e4e6ea 100%); }
.d0 .eye { margin-right: 11px; }
.viewcube { position: absolute; right: 8px; top: 39px; font-family: "Open Sans", sans-serif; }
.cube-text { font-weight: bold; fill: #6a6e77; }
.navbar { position: absolute; left: 978px; bottom: 11px; display: flex; align-items: center; gap: 12px; width: 444px; height: 45px; padding-left: 6px; background: #f2f2f2; color: #222; }
.navbar button { gap: 4px; }
.navbar .wide { gap: 9px; }
.navbar .plain { margin-right: 7px; }
.navbar .n { width: 30px; height: 30px; }
.navbar .c { width: 11px; height: 9px; }

/* timeline */
.timeline { display: flex; flex: none; height: 93px; background: #f2f2f2; border-top: 2px solid #d9d6d6; }
.playback { display: flex; gap: 19px; padding: 31px 0 0 16px; width: 265px; }
.playback button, .playback svg { width: 28px; height: 28px; }
.features { display: flex; }
.features li { position: relative; display: flex; justify-content: center; width: 45px; height: 76px; padding-top: 26px; }
.features svg { width: 32px; height: 32px; }
.features svg.pat { width: 28px; height: 32px; }
.features .off svg { opacity: .25; }
.features li::before { content: ""; position: absolute; left: 22px; top: 64px; width: 3px; height: 12px; background: #ccc; }
.features li::after { content: ""; position: absolute; left: 0; right: 0; bottom: 0; height: 3px; background: #ccc; }
.features li:first-child::after { left: 22px; }
.features li:last-child::after { right: 20px; }
.features .current { box-shadow: inset 0 -3px #ccc; }
.features .current::after { left: auto; right: -12px; top: 16px; width: 22px; height: 60px; z-index: 1; background: #555; clip-path: polygon(0 0, 100% 0, 100% 8px, 12px 20px, 12px 100%, 9px 100%, 9px 20px, 0 8px); }
.settings { margin: 29px 25px 0 auto; width: 30px; height: 30px; color: #808080; }
.settings svg { width: 30px; height: 30px; }
```
FILE: grid.js
```js
// Ground plane grid: two families of parallel lines, every fifth one major.
const grid = document.getElementById("grid");

function line(x1, y1, x2, y2, major) {
  const el = document.createElementNS("http://www.w3.org/2000/svg", "line");
  el.setAttribute("x1", x1);
  el.setAttribute("y1", y1);
  el.setAttribute("x2", x2);
  el.setAttribute("y2", y2);
  el.setAttribute("class", major ? "major" : "minor");
  grid.appendChild(el);
}

for (let k = -20; k <= 22; k++) {
  if (k === 0) continue;
  line(0, 895.6 + 37.6 * k, 2398, 605.8 + 37.6 * k, k % 5 === 0);
}
for (let k = -28; k <= 18; k++) {
  if (k === 0) continue;
  line(1322.4 + 63.9 * k, 260, 1690.5 + 63.9 * k, 1316, k % 5 === 0);
}
```
